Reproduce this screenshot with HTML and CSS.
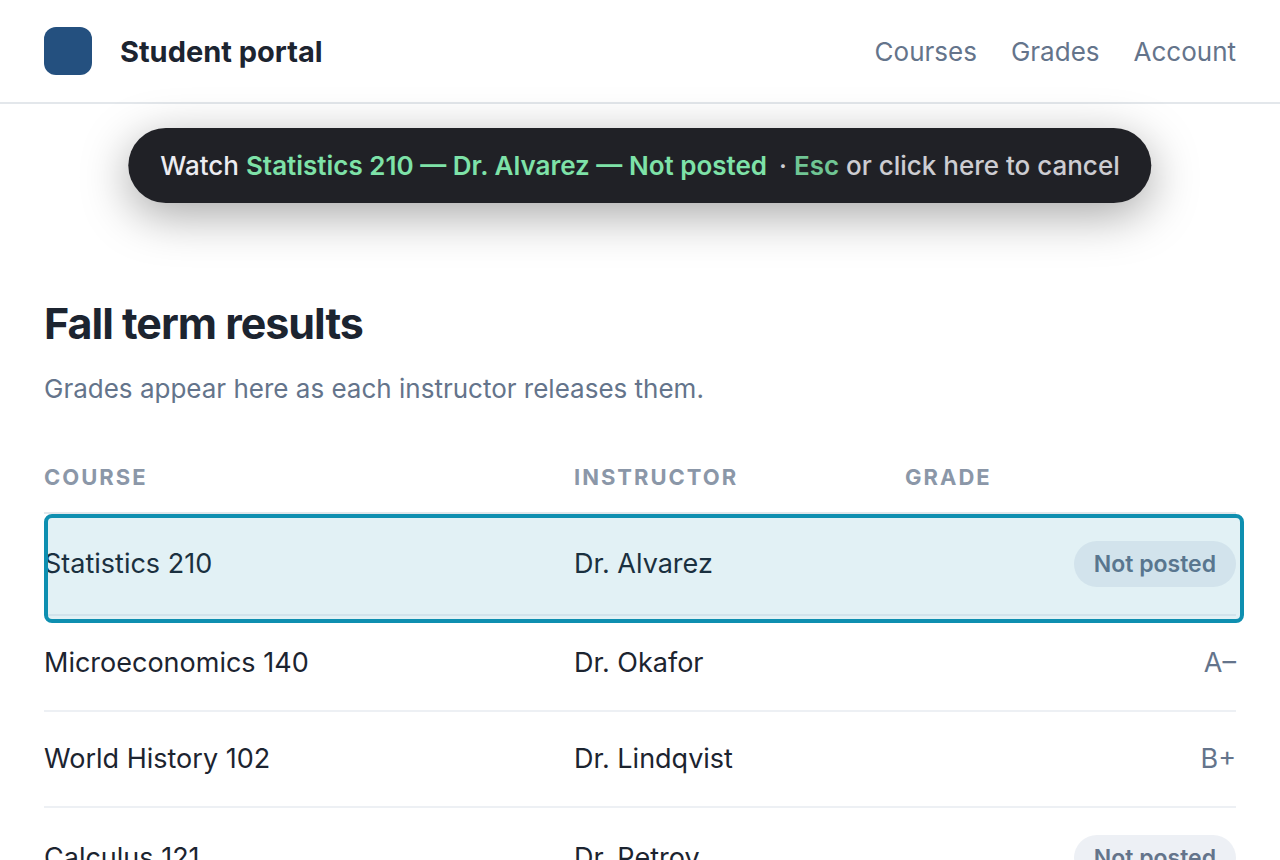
FILE: index.html
```html
<!DOCTYPE html>
<html lang="en">
<head>
    <meta charset="UTF-8">
    <meta name="viewport" content="width=device-width, initial-scale=1.0">
    <title>Student portal</title>
    <link rel="stylesheet" href="styles.css">
</head>
<body>

    <header class="topbar">
        <span class="logo"></span>
        <span class="brand">Student portal</span>
        <nav class="nav">
            <a href="#courses">Courses</a>
            <a href="#grades">Grades</a>
            <a href="#account">Account</a>
        </nav>
    </header>

    <button type="button" class="watch-bar">
        <span>Watch <b>Statistics 210 — Dr. Alvarez — Not posted</b></span>
        <span class="hint">· <b>Esc</b> or click here to cancel</span>
    </button>

    <main class="content">
        <h1>Fall term results</h1>
        <p class="intro">Grades appear here as each instructor releases them.</p>

        <table class="grades">
            <thead>
                <tr>
                    <th class="col-course">Course</th>
                    <th class="col-instructor">Instructor</th>
                    <th>Grade</th>
                </tr>
            </thead>
            <tbody>
                <tr class="picked">
                    <td>Statistics 210</td>
                    <td>Dr. Alvarez</td>
                    <td class="grade"><span class="pill">Not posted</span></td>
                </tr>
                <tr>
                    <td>Microeconomics 140</td>
                    <td>Dr. Okafor</td>
                    <td class="grade">A–</td>
                </tr>
                <tr>
                    <td>World History 102</td>
                    <td>Dr. Lindqvist</td>
                    <td class="grade">B+</td>
                </tr>
                <tr>
                    <td>Calculus 121</td>
                    <td>Dr. Petrov</td>
                    <td class="grade"><span class="pill">Not posted</span></td>
                </tr>
            </tbody>
        </table>
    </main>

</body>
</html>
```
FILE: styles.css
```css
* {
    box-sizing: border-box;
}
body {
    margin: 0;
    font-family: Inter, sans-serif;
    font-size: 26px;
    color: #1c2430;
    background: white;
}
.topbar {
    display: flex;
    align-items: center;
    gap: 28px;
    padding: 27px 44px;
    border-bottom: 2px solid #e3e7eb;
}
.logo {
    width: 48px;
    height: 48px;
    border-radius: 12px;
    background: #24507f;
}
.brand {
    font-size: 29px;
    font-weight: 700;
}
.nav {
    display: flex;
    gap: 34px;
    margin-left: auto;
}
.nav a {
    color: #64748b;
    text-decoration: none;
}
.watch-bar {
    position: absolute;
    top: 128px;
    left: 50%;
    transform: translateX(-50%);
    display: flex;
    gap: 12px;
    padding: 20px 32px;
    border: none;
    border-radius: 999px;
    background: #202126;
    color: #ececf1;
    font-family: inherit;
    font-size: 26px;
    font-weight: 500;
    line-height: 35px;
    white-space: nowrap;
    cursor: pointer;
    box-shadow: 0 12px 48px rgba(0, 0, 0, 0.35);
}
.watch-bar b {
    font-weight: 600;
    color: #7ee2a8;
}
.hint {
    opacity: 0.85;
}
.content {
    padding: 192px 44px 0;
}
h1 {
    margin: 0;
    font-size: 43px;
    line-height: 54px;
    letter-spacing: -1px;
}
.intro {
    margin: 21px 0 49px;
    line-height: 36px;
    color: #64748b;
}
.grades {
    width: 100%;
    border-collapse: separate;
    border-spacing: 0;
    table-layout: fixed;
}
.grades th {
    padding: 3px 0 17px;
    border-bottom: 2px solid #e3e7eb;
    font-size: 22px;
    line-height: 36px;
    text-align: left;
    text-transform: uppercase;
    letter-spacing: 2px;
    color: #8b97a8;
}
.grades td {
    padding: 28px 0;
    border-bottom: 2px solid #edf0f4;
    font-size: 27px;
    line-height: 38px;
}
.col-course {
    width: 530px;
}
.col-instructor {
    width: 331px;
}
.grades .grade {
    padding: 27px 0;
    text-align: right;
    color: #64748b;
}
.pill {
    display: inline-block;
    padding: 4px 20px;
    border-radius: 999px;
    background: #edf0f5;
    font-size: 23px;
    font-weight: 600;
    vertical-align: middle;
}
.picked {
    position: relative;
}
/* selection frame over the row being watched */
.picked .grade::after {
    content: "";
    position: absolute;
    inset: 0 -8px -7px 0;
    border: 4px solid #0e8fb0;
    border-radius: 8px;
    background: rgba(14, 143, 176, 0.12);
}
```
